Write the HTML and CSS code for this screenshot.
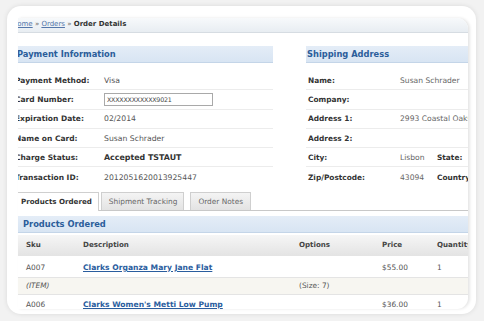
FILE: index.html
```html
<!DOCTYPE html>
<html>
<head>
<meta charset="utf-8">
<link rel="stylesheet" href="styles.css">
</head>
<body>
<div class="card">
  <div class="window">
    <div class="crumbs"><a href="#">Home</a> » <a href="#">Orders</a> » <b>Order Details</b></div>
    <div class="columns">
      <div class="col-left">
        <div class="sec-head">Payment Information</div>
        <div class="rows">
          <div class="row"><span class="lbl">Payment Method:</span><span class="val">Visa</span></div>
          <div class="row"><span class="lbl">Card Number:</span><span class="val"><span class="input">XXXXXXXXXXXX9021</span></span></div>
          <div class="row"><span class="lbl">Expiration Date:</span><span class="val">02/2014</span></div>
          <div class="row"><span class="lbl">Name on Card:</span><span class="val">Susan Schrader</span></div>
          <div class="row"><span class="lbl">Charge Status:</span><span class="val strong">Accepted TSTAUT</span></div>
          <div class="row"><span class="lbl">Transaction ID:</span><span class="val">2012051620013925447</span></div>
        </div>
      </div>
      <div class="col-right">
        <div class="sec-head">Shipping Address</div>
        <div class="rows">
          <div class="row"><span class="lbl2">Name:</span><span class="val2">Susan Schrader</span></div>
          <div class="row"><span class="lbl2">Company:</span><span class="val2"></span></div>
          <div class="row"><span class="lbl2">Address 1:</span><span class="val2">2993 Coastal Oaks</span></div>
          <div class="row"><span class="lbl2">Address 2:</span><span class="val2"></span></div>
          <div class="row"><span class="lbl2">City:</span><span class="val3">Lisbon</span><span class="lbl3">State:</span></div>
          <div class="row"><span class="lbl2">Zip/Postcode:</span><span class="val3">43094</span><span class="lbl3">Country:</span></div>
        </div>
      </div>
    </div>
    <div class="tabs">
      <div class="tab active">Products Ordered</div>
      <div class="tab">Shipment Tracking</div>
      <div class="tab">Order Notes</div>
    </div>
    <div class="panel">
      <div class="sec-head wide">Products Ordered</div>
      <div class="table">
        <div class="trow thead"><span class="c-sku">Sku</span><span class="c-desc">Description</span><span class="c-opt">Options</span><span class="c-price">Price</span><span class="c-qty">Quantity</span></div>
        <div class="trow"><span class="c-sku">A007</span><span class="c-desc"><a href="#">Clarks Organza Mary Jane Flat</a></span><span class="c-opt"></span><span class="c-price">$55.00</span><span class="c-qty">1</span></div>
        <div class="trow sub"><span class="c-sku"><i>(ITEM)</i></span><span class="c-desc"></span><span class="c-opt">(Size: 7)</span><span class="c-price"></span><span class="c-qty"></span></div>
        <div class="trow"><span class="c-sku">A006</span><span class="c-desc"><a href="#">Clarks Women's Metti Low Pump</a></span><span class="c-opt"></span><span class="c-price">$36.00</span><span class="c-qty">1</span></div>
      </div>
    </div>
  </div>
</div>
</body>
</html>
```
FILE: styles.css
```css
html, body {
  margin: 0;
  padding: 0;
}
body {
  background: #f2f2f2;
  font-family: "DejaVu Sans", Verdana, sans-serif;
  font-size: 7.4px;
  color: #555;
  width: 484px;
  height: 321px;
  overflow: hidden;
}
.card {
  margin: 6px 0 0 7px;
  width: 469px;
  height: 308px;
  background: #fff;
  border-radius: 14px;
  box-shadow: 0 0 5px rgba(0,0,0,0.10);
  padding: 12px 8px 0 11px;
  box-sizing: border-box;
}
.window {
  width: 450px;
  height: 291px;
  overflow: hidden;
  border-radius: 0 11px 11px 0;
  box-shadow: 2px 0 3px rgba(0,0,0,0.10);
  background: #fff;
}
.crumbs {
  height: 15px;
  line-height: 12px;
  margin-left: -7px;
  padding-left: 7px;
  background: linear-gradient(#f7f9fb, #e8edf2);
  border-bottom: 1px solid #d6dce2;
  color: #666;
  font-size: 7px;
  box-sizing: border-box;
  white-space: nowrap;
}
.crumbs a { color: #5577aa; }
.crumbs a:first-child { margin-left: -6px; }
.crumbs b { color: #333; }
.columns {
  display: flex;
  margin-top: 13px;
  gap: 33px;
}
.col-left { width: 255px; flex: none; }
.col-right { width: 180px; flex: none; }
.sec-head {
  height: 17px;
  line-height: 17px;
  background: linear-gradient(#e4edf7, #d8e5f3);
  border-bottom: 1px solid #c4d5e8;
  color: #2b5d9a;
  font-weight: bold;
  font-size: 8.3px;
  box-sizing: border-box;
  white-space: nowrap;
}
.col-left .sec-head { margin-left: -1px; }
.col-right .sec-head { padding-left: 1px; }
.rows { margin-top: 8px; }
.row {
  display: flex;
  align-items: center;
  height: 19.3px;
  border-bottom: 1px solid #ececec;
  box-sizing: border-box;
  white-space: nowrap;
}
.col-left .row:last-child, .col-right .row:last-child { border-bottom: none; }
.lbl {
  width: 89px;
  margin-left: -3px;
  flex: none;
  font-weight: bold;
  color: #333;
  font-size: 7.5px;
}
.val { color: #555; font-size: 7.7px; }
.val.strong { font-weight: bold; color: #333; font-size: 7.9px; }
.input {
  display: inline-block;
  width: 105px;
  height: 11px;
  line-height: 11px;
  border: 1px solid #a9a9a9;
  padding-left: 2px;
  font-size: 6.3px;
  color: #444;
  letter-spacing: -0.2px;
}
.lbl2 {
  width: 92px;
  flex: none;
  padding-left: 2px;
  font-weight: bold;
  color: #333;
}
.val2 { color: #666; font-size: 7.6px; }
.val3 { width: 37px; color: #666; flex: none; font-size: 7.6px; }
.lbl3 { font-weight: bold; color: #333; }
.tabs {
  display: flex;
  gap: 2px;
  margin-top: 5px;
  height: 18px;
  border-bottom: 1px solid #c8c8c8;
}
.tab {
  height: 18px;
  line-height: 18px;
  padding: 0 6px;
  border: 1px solid #cfcfcf;
  border-bottom: none;
  background: linear-gradient(#f4f4f4, #e3e3e3);
  box-sizing: border-box;
  color: #666;
  white-space: nowrap;
}
.tab.active {
  background: #fff;
  font-weight: bold;
  color: #333;
  border-left: none;
  height: 19px;
  margin-left: -2px;
  padding-left: 5px;
  font-size: 7.1px;
}
.tab:nth-child(2) { padding: 0 6px 0 7px; }
.tab:nth-child(3) { margin-left: 4px; padding: 0 7px; }
.panel { padding-top: 5px; }
.sec-head.wide { padding-left: 5px; }
.table { margin-top: 2px; }
.trow {
  display: flex;
  align-items: center;
  height: 20px;
  border-bottom: 1px solid #e4e4e4;
  box-sizing: border-box;
  white-space: nowrap;
  padding-left: 8px;
}
.trow.thead {
  background: linear-gradient(#f6f6f6, #e4e4e4);
  font-weight: bold;
  color: #444;
  height: 21px;
  margin-bottom: 2px;
  font-size: 7.1px;
}
.trow.sub { background: #f7f6f1; height: 17px; }
.c-sku { width: 57px; flex: none; }
.c-desc { width: 216px; flex: none; }
.c-desc a { color: #2a5d9e; font-weight: bold; font-size: 7.6px; }
.c-opt { width: 83px; flex: none; }
.c-price { width: 55px; flex: none; }
.c-qty { flex: none; }
```
